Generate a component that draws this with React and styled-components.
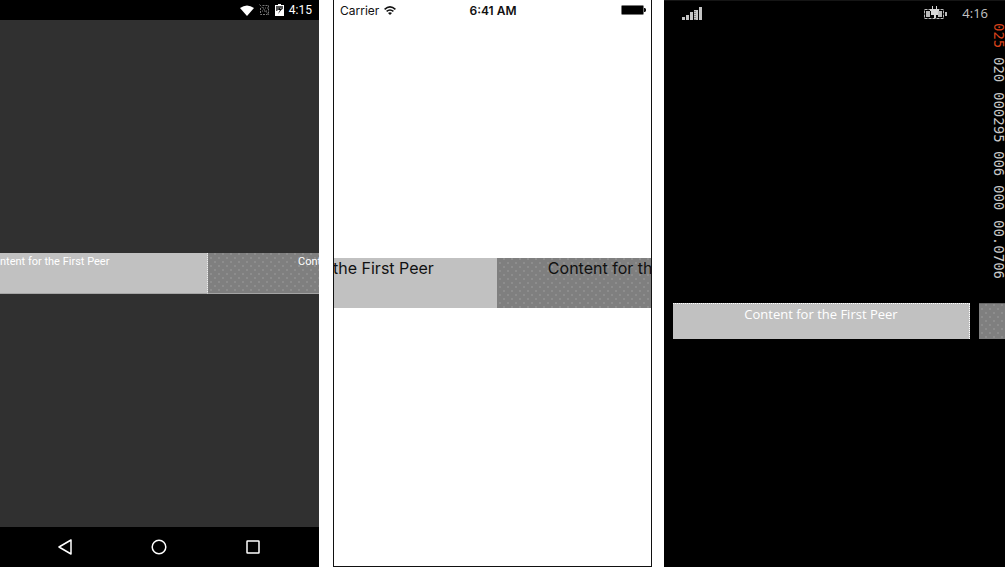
import React from "react";
import styled, { createGlobalStyle, css } from "styled-components";

const GlobalStyle = createGlobalStyle`
  * { box-sizing: border-box; }
  body { margin: 0; background: #fff; }
`;

const Screens = styled.main`
  display: grid;
  grid-template-columns: 321fr 319fr 341fr;
  gap: 12px;
  min-height: 100vh;
`;

const Phone = styled.section`
  display: flex;
  flex-direction: column;
  min-width: 0;
  overflow: hidden;
`;

const AndroidPhone = styled(Phone)`
  margin-right: 2px;
  background: #303030;
  color: #fff;
  font-family: Roboto, sans-serif;
`;

const ApplePhone = styled(Phone)`
  border: 1px solid #111;
  border-top: 0;
  background: #fff;
  color: #111;
  font-family: Inter, sans-serif;
`;

const WindowsPhone = styled(Phone)`
  position: relative;
  background: #000;
  border-top: 1px solid #151515;
  color: #fff;
  font-family: "Open Sans", sans-serif;
`;

const AndroidStatus = styled.header`
  display: flex;
  align-items: center;
  justify-content: flex-end;
  gap: 5px;
  height: 20px;
  padding-right: 7px;
  background: #000;
  font-size: 12px;
`;

const AppleStatus = styled.header`
  display: grid;
  grid-template-columns: 1fr auto 1fr;
  align-items: center;
  height: 20px;
  padding: 0 5px 0 6px;
  font-size: 11px;
`;

const Carrier = styled.span`
  display: flex;
  align-items: center;
  gap: 5px;
  font-size: 12px;
`;

const AppleTime = styled.time`
  font-size: 12px;
  font-weight: 600;
`;

const AppleBattery = styled.svg`
  justify-self: end;
`;

const WindowsStatus = styled.header`
  display: flex;
  align-items: center;
  gap: 15px;
  height: 24px;
  padding: 0 17px;
  color: #c4c4c4;
  font-size: 13px;
`;

const WindowsSignal = styled.svg`
  margin-right: auto;
`;

const Stage = styled.div`
  flex: 1;
  display: flex;
  align-items: center;
  padding-top: ${(p) => p.$top || 0}px;
  padding-bottom: ${(p) => p.$bottom || 0}px;
`;

const Carousel = styled.div`
  flex: 1;
  display: flex;
  gap: ${(p) => p.$gap || 0}px;
  min-width: 0;
  padding: 0 ${(p) => p.$peek || 0}px 0 ${(p) => p.$inset || 0}px;
  margin-left: -${(p) => p.$scrolled || 0}px;
  margin-right: ${(p) => p.$scrolled || 0}px;
`;

const dither = css`
  background-image: radial-gradient(circle at 1px 1px, #8d8d8d 0 1px, transparent 1px),
    radial-gradient(circle at 1px 1px, #8d8d8d 0 1px, transparent 1px);
  background-size: 8px 8px;
  background-position: 2px 4px, 6px 8px;
`;

const Tile = styled.article`
  flex: 0 0 100%;
  height: ${(p) => p.$height}px;
  background-color: ${(p) => (p.$second ? "#7f7f7f" : "#c1c1c1")};
  ${(p) => p.$second && dither}
  ${(p) => p.$edges}
  font-size: ${(p) => p.$size}px;
  line-height: ${(p) => p.$line}px;
  text-align: center;
  white-space: nowrap;
`;

const androidEdges = css`
  border-right: 1px dotted #eee;
  border-bottom: 1px solid #a5a5a5;
`;

const windowsEdges = css`
  border-top: 1px dotted #fff;
  border-right: 1px dotted #fff;
`;

const darkEdge = css`
  border-top: 1px solid #666;
`;

const NavBar = styled.nav`
  display: flex;
  align-items: center;
  justify-content: center;
  gap: 70px;
  height: 40px;
  padding-right: 1px;
  background: #000;
`;

const NavButton = styled.button`
  display: flex;
  align-items: center;
  justify-content: center;
  width: 24px;
  height: 24px;
  padding: 0;
  border: 0;
  background: none;
  color: #fff;
`;

const FrameCounter = styled.aside`
  position: absolute;
  top: 22px;
  right: 1px;
  display: flex;
  gap: 9px;
  writing-mode: vertical-rl;
  color: #c8c8c8;
  font-family: "DejaVu Sans Mono", monospace;
  font-size: 14px;
  line-height: 10px;
`;

const Counter = styled.span`
  color: ${(p) => (p.$warning ? "#d8421b" : "inherit")};
`;

const counters = ["025", "020", "000295", "006", "000", "00.0706"];

function Tiles({ height, size, line, edges, secondEdges }) {
  return (
    <>
      <Tile $height={height} $size={size} $line={line} $edges={edges}>
        Content for the First Peer
      </Tile>
      <Tile $second $height={height} $size={size} $line={line} $edges={secondEdges}>
        Content for the Second Peer
      </Tile>
    </>
  );
}

function Android() {
  return (
    <AndroidPhone aria-label="Android">
      <AndroidStatus>
        <svg width="14" height="11" viewBox="0 0 14 11" aria-hidden="true">
          <path d="M0 3Q7-2 14 3L7 11Z" fill="#fff" />
        </svg>
        <svg width="11" height="12" viewBox="0 0 11 12" fill="none" stroke="#777" aria-hidden="true">
          <path d="M3.5 1.5h6v9M1.5 4v6.5h7M.5.5l10 11" strokeDasharray="2 1" />
          <path d="M4 4h5M3 7h5" strokeDasharray="1 1" />
        </svg>
        <svg width="9" height="12" viewBox="0 0 9 12" aria-hidden="true">
          <path d="M3 0h3v1h3v11H0V1h3Z" fill="#fff" />
          <path d="M1 2h7v3L5 6 6 3 2 7H1Z" fill="#555" />
          <path d="M6 2 3 6h2L3 10l4-5H5Z" fill="#000" />
        </svg>
        <time>4:15</time>
      </AndroidStatus>
      <Stage>
        <Carousel $scrolled={111}>
          <Tiles height={41} size={11} line={17} edges={androidEdges} secondEdges={androidEdges} />
        </Carousel>
      </Stage>
      <NavBar aria-label="System">
        <NavButton aria-label="Back">
          <svg width="16" height="16" viewBox="0 0 16 16" fill="none" stroke="currentColor" strokeWidth="1.5" strokeLinejoin="round">
            <path d="M14 1v14L2 8Z" />
          </svg>
        </NavButton>
        <NavButton aria-label="Home">
          <svg width="16" height="16" viewBox="0 0 16 16" fill="none" stroke="currentColor" strokeWidth="1.5">
            <circle cx="8" cy="8" r="6.8" />
          </svg>
        </NavButton>
        <NavButton aria-label="Recent apps">
          <svg width="16" height="16" viewBox="0 0 16 16" fill="none" stroke="currentColor" strokeWidth="1.5">
            <rect x="2" y="2" width="12" height="12" rx=".5" />
          </svg>
        </NavButton>
      </NavBar>
    </AndroidPhone>
  );
}

function Apple() {
  return (
    <ApplePhone aria-label="iPhone">
      <AppleStatus>
        <Carrier>
          Carrier
          <svg width="12" height="9" viewBox="0 0 12 9" fill="none" stroke="#111" strokeWidth="1.6" aria-hidden="true">
            <path d="M.6 3.3Q6-1.4 11.4 3.3M2.6 5.4q3.4-2.8 6.8 0" />
            <path d="M4 7q2-1.5 4 0L6 9Z" fill="#111" stroke="none" />
          </svg>
        </Carrier>
        <AppleTime>6:41 AM</AppleTime>
        <AppleBattery width="25" height="10" viewBox="0 0 25 10" aria-hidden="true">
          <rect x=".5" y=".5" width="22" height="9" rx="1" fill="#000" stroke="#777" />
          <path d="M23 3h1l1 1v2l-1 1h-1Z" fill="#111" />
        </AppleBattery>
      </AppleStatus>
      <Stage $bottom={20}>
        <Carousel $scrolled={154}>
          <Tiles height={50} size={16} line={20} />
        </Carousel>
      </Stage>
    </ApplePhone>
  );
}

function Windows() {
  return (
    <WindowsPhone aria-label="Windows Phone">
      <WindowsStatus>
        <WindowsSignal width="22" height="14" viewBox="0 0 22 14" fill="#c4c4c4" aria-hidden="true">
          <path d="M1 11h3v3H1ZM5 9h3v5H5ZM9 6h3v8H9ZM13 4h4v10h-4ZM18 1h3v13h-3Z" />
          <path d="M14 5v9" stroke="#444" strokeDasharray="1 1" />
        </WindowsSignal>
        <svg width="23" height="14" viewBox="0 0 23 14" aria-hidden="true">
          <rect x=".5" y="3.5" width="19" height="9" fill="none" stroke="#bbb" strokeDasharray="3 1" />
          <path d="M2 5h4v6H2ZM14 5h4v6h-4ZM21 6h2v4h-2Z" fill="#bbb" />
          <path d="M8 0h1v3h3V0h1v3h2v2h-1v4h-2v3h-2V9H7V5H6V3h2Z" fill="#d5d5d5" />
        </svg>
        <time>4:16</time>
      </WindowsStatus>
      <Stage $top={50}>
        <Carousel $gap={9} $inset={9} $peek={35}>
          <Tiles height={36} size={13} line={20} edges={windowsEdges} secondEdges={darkEdge} />
        </Carousel>
      </Stage>
      <FrameCounter aria-label="Frame rate counters">
        {counters.map((value, i) => (
          <Counter key={i} $warning={i === 0}>
            {value}
          </Counter>
        ))}
      </FrameCounter>
    </WindowsPhone>
  );
}

export default function App() {
  return (
    <>
      <GlobalStyle />
      <Screens>
        <Android />
        <Apple />
        <Windows />
      </Screens>
    </>
  );
}
